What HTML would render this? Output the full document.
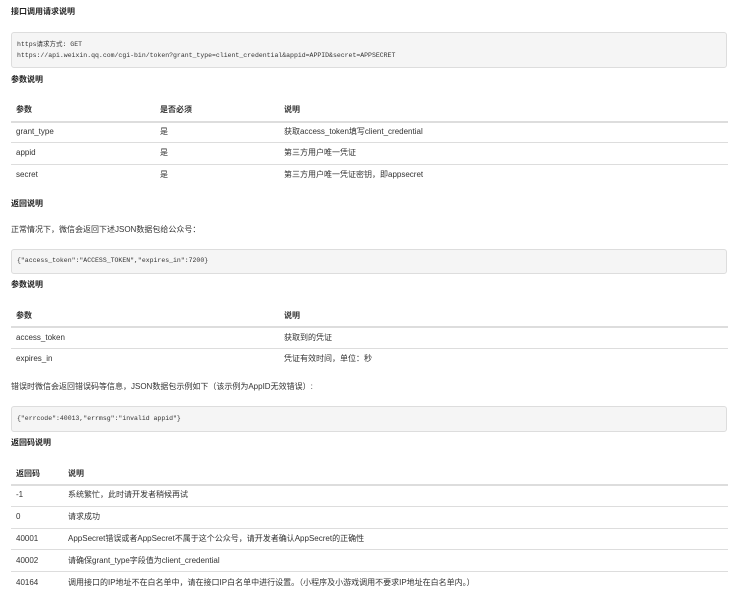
<!DOCTYPE html>
<html><head><meta charset="utf-8"><style>
html,body{margin:0;padding:0;background:#fff;width:732px;height:603px;overflow:hidden}
body{position:relative;font-family:"Liberation Sans","Noto Sans CJK SC",sans-serif;color:#333;font-size:8px}
.a{position:absolute;white-space:nowrap;line-height:10px}
.h{font-weight:bold;font-size:8px;color:#222}
.code{position:absolute;left:11px;width:716px;background:#f5f5f5;border:1px solid #ddd;border-radius:3px;box-sizing:border-box}
.m{font-family:"Liberation Mono","Noto Sans CJK SC",monospace;font-size:6.5px;color:#333}
.l{position:absolute;left:11px;width:717px;height:1px;background:#ddd}
.th{font-weight:bold}
</style></head><body>
<div class="a h" style="left:11px;top:7px">接口调用请求说明</div>
<div class="code" style="top:32px;height:36px"></div>
<div class="a m" style="left:17px;top:40px">https请求方式: GET</div>
<div class="a m" style="left:17px;top:51px">https://api.weixin.qq.com/cgi-bin/token?grant_type=client_credential&amp;appid=APPID&amp;secret=APPSECRET</div>
<div class="a h" style="left:11px;top:75px">参数说明</div>
<div class="a th" style="left:16px;top:105px">参数</div>
<div class="a th" style="left:160px;top:105px">是否必须</div>
<div class="a th" style="left:284px;top:105px">说明</div>
<div class="l" style="top:121px;height:2px"></div>
<div class="a" style="left:16px;top:127px">grant_type</div>
<div class="a" style="left:160px;top:127px">是</div>
<div class="a" style="left:284px;top:127px">获取access_token填写client_credential</div>
<div class="l" style="top:142px"></div>
<div class="a" style="left:16px;top:148px">appid</div>
<div class="a" style="left:160px;top:148px">是</div>
<div class="a" style="left:284px;top:148px">第三方用户唯一凭证</div>
<div class="l" style="top:164px"></div>
<div class="a" style="left:16px;top:170px">secret</div>
<div class="a" style="left:160px;top:170px">是</div>
<div class="a" style="left:284px;top:170px">第三方用户唯一凭证密钥，即appsecret</div>
<div class="a h" style="left:11px;top:199px">返回说明</div>
<div class="a" style="left:11px;top:225px">正常情况下，微信会返回下述JSON数据包给公众号：</div>
<div class="code" style="top:249px;height:25px"></div>
<div class="a m" style="left:17px;top:256px">{"access_token":"ACCESS_TOKEN","expires_in":7200}</div>
<div class="a h" style="left:11px;top:280px">参数说明</div>
<div class="a th" style="left:16px;top:311px">参数</div>
<div class="a th" style="left:284px;top:311px">说明</div>
<div class="l" style="top:326px;height:2px"></div>
<div class="a" style="left:16px;top:333px">access_token</div>
<div class="a" style="left:284px;top:333px">获取到的凭证</div>
<div class="l" style="top:348px"></div>
<div class="a" style="left:16px;top:354px">expires_in</div>
<div class="a" style="left:284px;top:354px">凭证有效时间，单位：秒</div>
<div class="a" style="left:11px;top:382px">错误时微信会返回错误码等信息，JSON数据包示例如下（该示例为AppID无效错误）:</div>
<div class="code" style="top:406px;height:26px"></div>
<div class="a m" style="left:17px;top:414px">{"errcode":40013,"errmsg":"invalid appid"}</div>
<div class="a h" style="left:11px;top:438px">返回码说明</div>
<div class="a th" style="left:16px;top:469px">返回码</div>
<div class="a th" style="left:68px;top:469px">说明</div>
<div class="l" style="top:484px;height:2px"></div>
<div class="a" style="left:16px;top:490px">-1</div>
<div class="a" style="left:68px;top:490px">系统繁忙，此时请开发者稍候再试</div>
<div class="l" style="top:506px"></div>
<div class="a" style="left:16px;top:512px">0</div>
<div class="a" style="left:68px;top:512px">请求成功</div>
<div class="l" style="top:528px"></div>
<div class="a" style="left:16px;top:534px">40001</div>
<div class="a" style="left:68px;top:534px">AppSecret错误或者AppSecret不属于这个公众号，请开发者确认AppSecret的正确性</div>
<div class="l" style="top:549px"></div>
<div class="a" style="left:16px;top:556px">40002</div>
<div class="a" style="left:68px;top:556px">请确保grant_type字段值为client_credential</div>
<div class="l" style="top:571px"></div>
<div class="a" style="left:16px;top:578px">40164</div>
<div class="a" style="left:68px;top:578px">调用接口的IP地址不在白名单中，请在接口IP白名单中进行设置。（小程序及小游戏调用不要求IP地址在白名单内。）</div>
</body></html>
